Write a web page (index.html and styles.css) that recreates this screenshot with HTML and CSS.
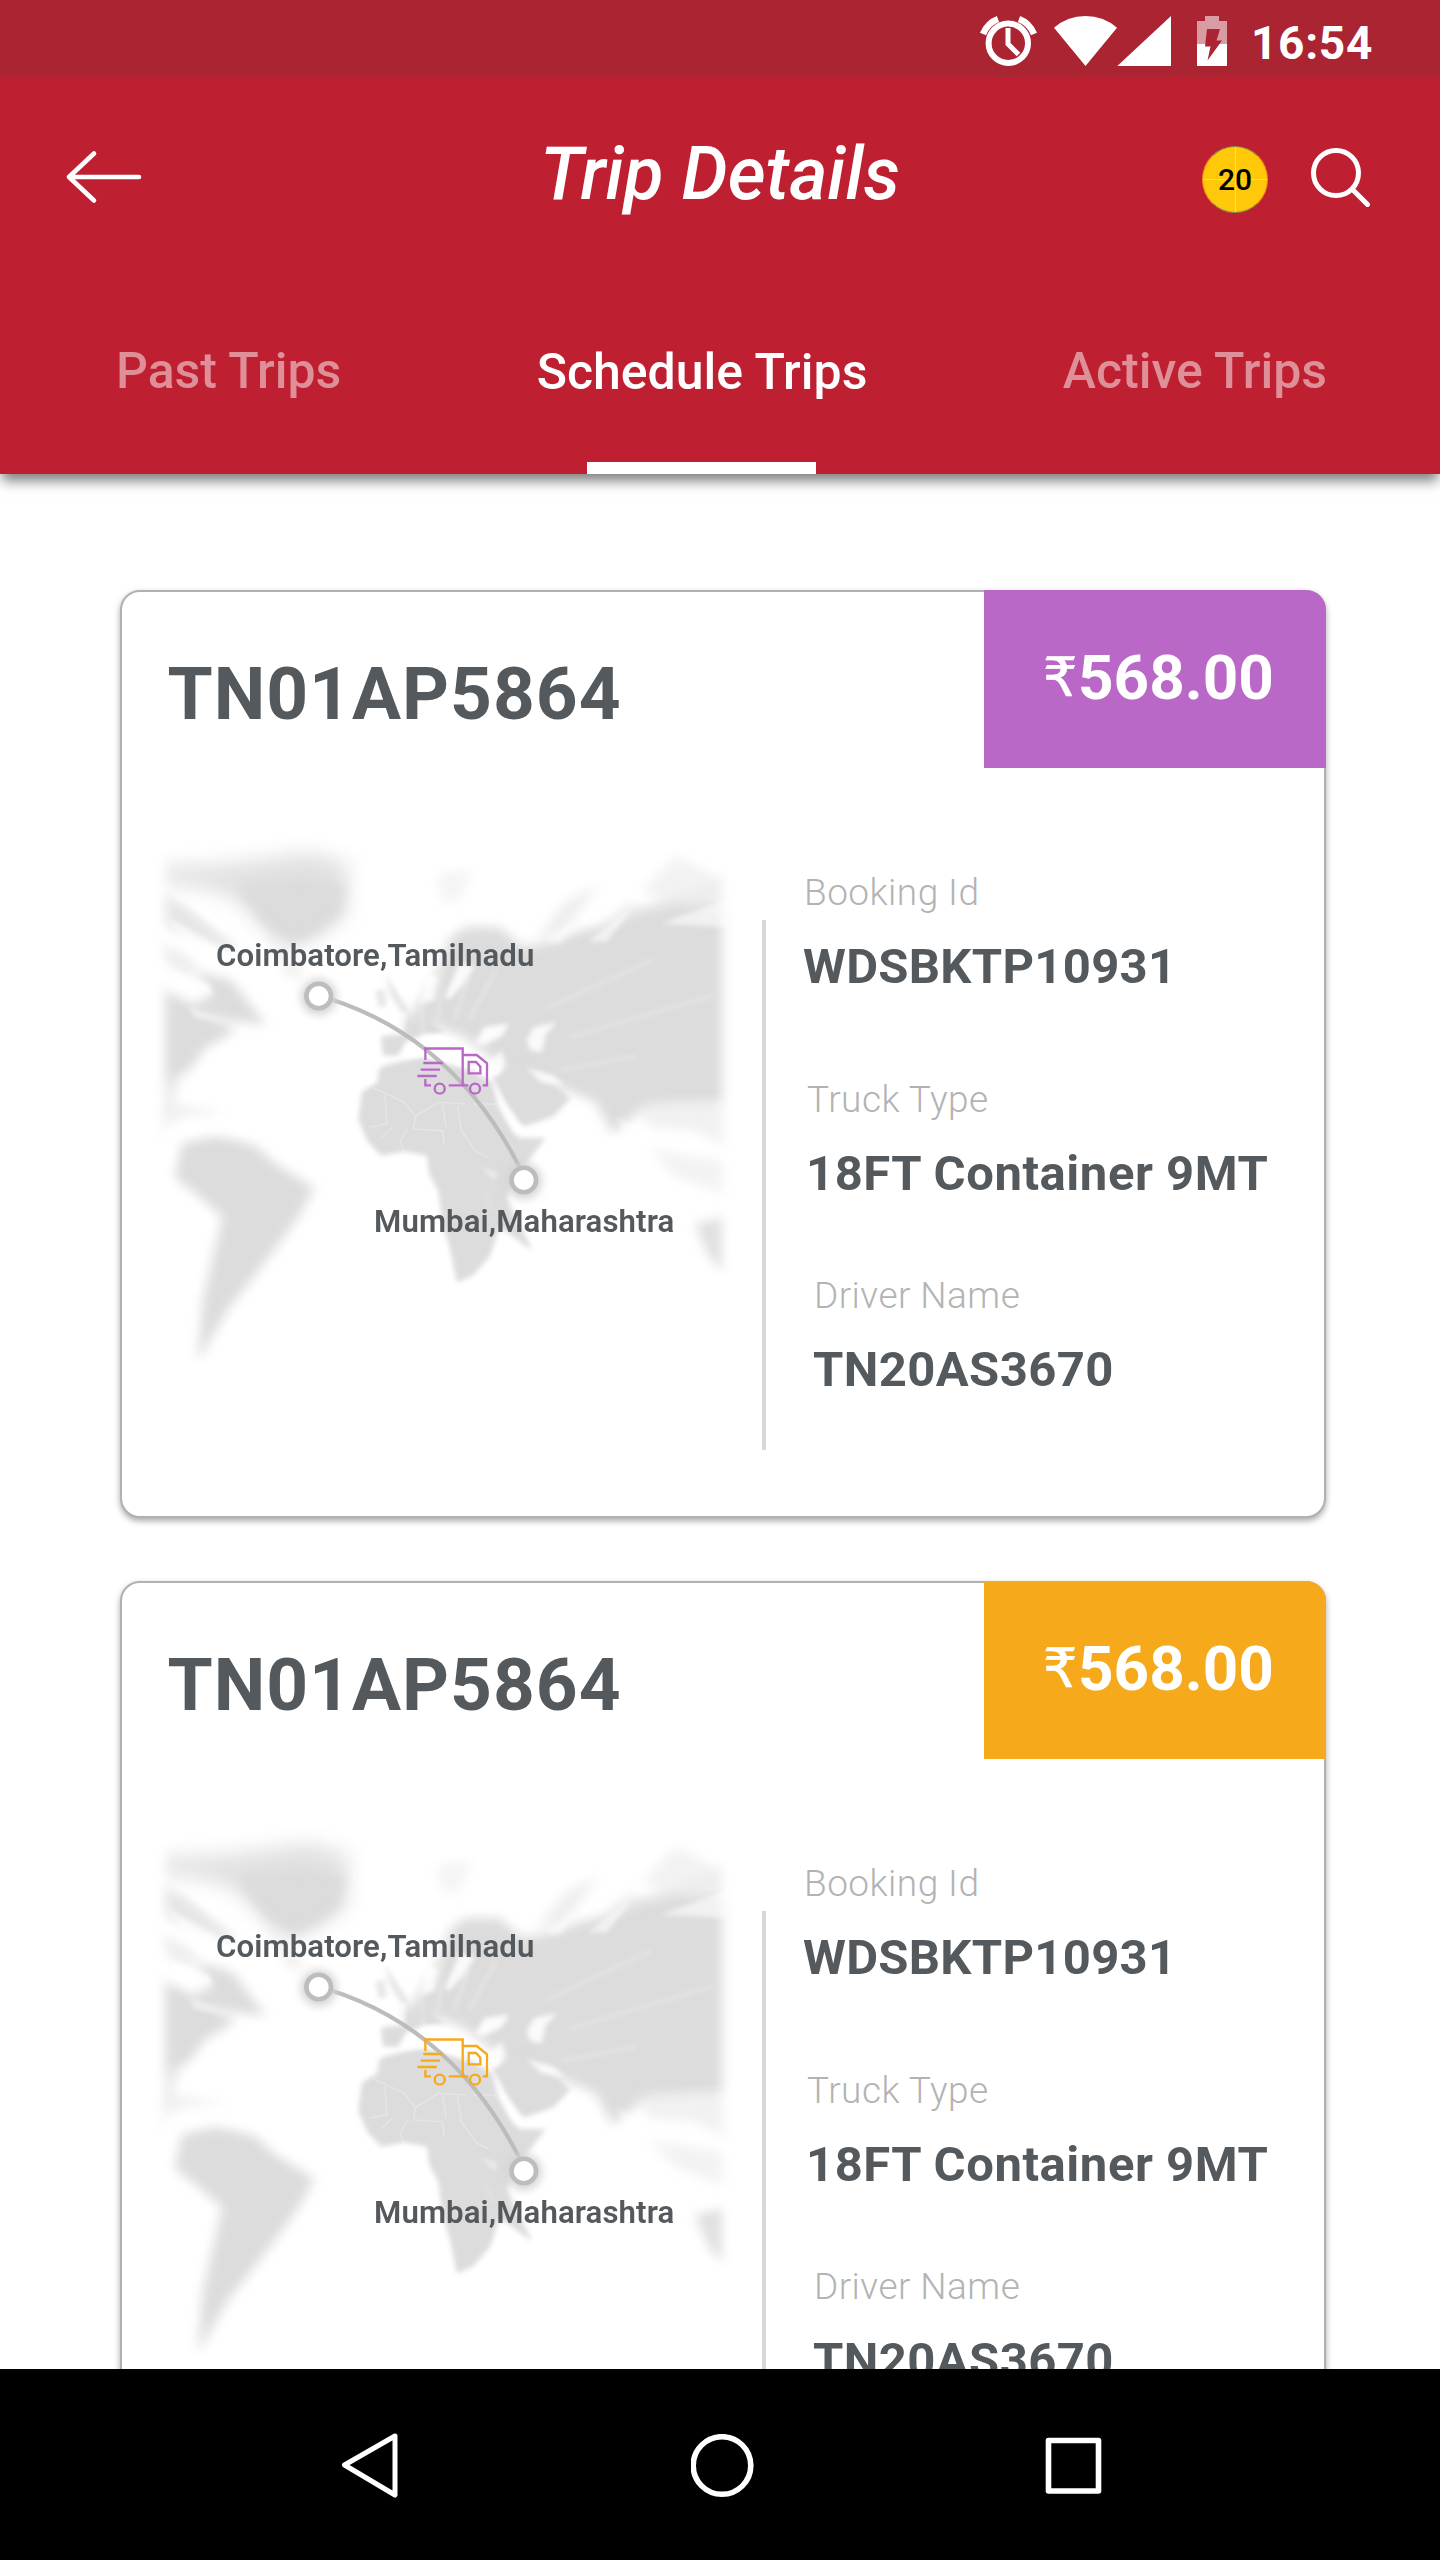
FILE: index.html
```html
<!DOCTYPE html>
<html lang="en">
<head>
<meta charset="utf-8">
<meta name="viewport" content="width=device-width, initial-scale=1">
<title>Trip Details</title>
<link rel="stylesheet" href="styles.css">
</head>
<body>
<svg class="defs" width="0" height="0" aria-hidden="true">
  <defs>
    <filter id="soft-s" x="-20%" y="-20%" width="140%" height="140%"><feGaussianBlur stdDeviation="7"/></filter>
    <filter id="soft-m" x="-20%" y="-20%" width="140%" height="140%"><feGaussianBlur stdDeviation="15"/></filter>
    <filter id="soft-l" x="-30%" y="-30%" width="160%" height="160%"><feGaussianBlur stdDeviation="28"/></filter>
    <mask id="map-fade" maskUnits="userSpaceOnUse" x="0" y="0" width="1568" height="1568">
      <rect x="66" y="30" width="1456" height="1510" fill="#fff" filter="url(#soft-m)"/>
    </mask>
    <symbol id="world" viewBox="0 0 1568 1568" preserveAspectRatio="none">
      <g mask="url(#map-fade)" fill="#dcdcdc">
        <!-- Greenland -->
        <path filter="url(#soft-l)" opacity=".85" d="M20 130L200 125L440 90L545 120L535 270L470 320L400 360L330 310L250 220L160 190L20 170Z"/>
        <path filter="url(#soft-m)" d="M250 185L420 165L535 180L525 260L470 310L400 345L335 305Z"/>
        <path filter="url(#soft-m)" opacity=".5" d="M330 300L430 440L390 440Z"/>
        <!-- North America -->
        <g filter="url(#soft-m)">
          <path d="M20 190L120 240L250 355L230 365L20 280Z" opacity=".7"/>
          <path d="M20 320L150 400L130 440L20 380Z" opacity=".5"/>
          <path d="M140 420L240 450L330 575L230 560L130 520L190 490Z"/>
          <path d="M20 460L110 500L250 590L170 640L130 700L20 760Z"/>
          <path d="M20 740L110 720L20 940Z" opacity=".6"/>
          <path d="M20 780L230 820L120 830L20 880Z" opacity=".4"/>
        </g>
        <!-- South America -->
        <path filter="url(#soft-m)" d="M110 905L200 885L300 910L350 960L455 1030L415 1110L340 1220L230 1370L150 1520L165 1340L215 1110L150 1050L90 1000Z"/>
        <!-- Eurasia -->
        <path filter="url(#soft-m)" d="M690 565L730 510L780 420L810 330L850 300L940 300L1000 355L1080 340L1150 310L1230 290L1300 255L1400 235L1600 250L1600 790L1400 795L1320 800L1290 830L1235 880L1190 790L1100 750L1020 730L960 710L900 650L850 610L760 570L700 600Z"/>
        <path filter="url(#soft-s)" d="M630 605L690 600L705 545L760 560L800 600L740 600L695 620L675 660L635 660Z"/>
        <g filter="url(#soft-s)" opacity=".7">
          <path d="M640 430L710 545L680 535L655 490Z"/>
          <path d="M615 480L640 470L645 520L625 525Z"/>
        </g>
        <g filter="url(#soft-m)" opacity=".5">
          <path d="M780 150L870 140L830 230L785 225Z" opacity=".6"/>
          <path d="M1030 340L1110 230L1200 180L1110 310Z"/>
          <path d="M1200 300L1280 230L1330 260Z"/>
          <path d="M1310 200L1400 100L1510 160L1400 240Z" opacity=".7"/>
          <path d="M1280 260L1540 150L1540 260Z"/>
        </g>
        <!-- Africa and Arabia -->
        <path filter="url(#soft-s)" d="M645 685L740 660L850 690L920 735L960 840L990 890L1060 890L1010 960L975 1010L960 1060L1025 1205L940 1140L915 1220L870 1275L828 1295L810 1200L790 1130L780 1040L755 990L750 940L690 928L630 940L595 900L570 840L580 760L620 735L625 695Z"/>
        <path filter="url(#soft-s)" d="M920 720L1000 670L1080 735L1125 780L1080 830L1000 860L950 790Z"/>
        <!-- South-east Asia and Australia -->
        <g filter="url(#soft-m)">
          <path opacity=".4" d="M1290 790L1560 790L1560 930L1450 870L1330 860Z"/>
          <path opacity=".35" d="M1330 920L1560 960L1560 1060L1400 1000Z"/>
          <path opacity=".9" d="M1450 1130L1540 1110L1540 1270L1490 1230Z"/>
        </g>
      </g>
      <!-- seas and zoom streaks -->
      <g fill="#fff" filter="url(#soft-s)">
        <path opacity=".9" d="M875 625L900 580L965 570L945 605L900 630Z"/>
        <path opacity=".85" d="M1010 615L1030 580L1090 565L1060 600L1050 650L1020 645Z"/>
        <path opacity=".8" d="M900 690L945 645L955 680L930 720Z"/>
        <path opacity=".95" d="M700 650L745 605L790 600L850 635L860 700L760 665L680 665Z"/>
        <path opacity=".8" d="M735 515L745 430L780 440L770 505Z"/>
        <path opacity=".85" d="M795 500L835 400L875 410L845 460L810 500Z"/>
        <path opacity=".85" d="M925 735L985 850L1010 865L980 880L935 800Z"/>
        <path opacity=".85" d="M1010 695L1080 715L1110 745L1050 735Z"/>
        <path opacity=".6" d="M890 970L935 990L925 1005Z"/>
        <path opacity=".5" d="M885 1010L935 1110L915 1080Z"/>
        <path opacity=".55" d="M960 1060L1000 1140L980 1130Z"/>
        <path opacity=".6" d="M1170 340L1290 240L1220 340Z"/>
        <path opacity=".5" d="M1060 340L1140 280L1100 345Z"/>
        <path opacity=".6" d="M1360 290L1540 220L1540 300Z"/>
        <path opacity=".7" d="M80 420L180 460L190 490L90 470Z"/>
        <path opacity=".6" d="M70 270L240 380L300 440L150 400Z"/>
        <path opacity=".5" d="M130 520L240 570L140 555Z"/>
        <path opacity=".6" d="M80 200L180 250L300 340L200 300Z"/>
        <path opacity=".4" d="M1240 830L1290 920L1350 930L1290 850Z"/>
      </g>
      <g fill="none" stroke="#fff" stroke-width="9" opacity=".3" filter="url(#soft-s)">
        <path d="M1120 610L1500 490M1060 530L1340 390M1100 700L1300 660M860 560L930 420M820 560L860 440M715 570L695 440M740 620L735 480M780 560L790 420M650 520L610 430"/>
      </g>
      <g fill="none" stroke="#fff" stroke-width="4" opacity=".28">
        <path d="M610 750L690 790L720 830L780 790L850 795M720 830L715 865L790 870L795 910M640 770L645 850L600 860M830 800L840 870L880 930L910 945M790 790L800 860M660 860L630 890M700 865L680 900L690 930M870 795L930 795"/>
      </g>
    </symbol>
    <symbol id="truck" viewBox="0 0 216 146">
      <g fill="none" stroke="currentColor" stroke-width="7">
        <path d="M26 42V7.500H138V118H96M26 99V118H43M138 27H180L211 52V118H198M138 118H155"/>
        <path d="M20 51H78M12 71H70M2 90H60"/>
        <path d="M156 48H178L191 62V82H156Z"/>
        <circle cx="69" cy="128" r="15"/><circle cx="175" cy="128" r="15"/>
      </g>
    </symbol>
  </defs>
</svg>

<div class="screen">
  <header class="header">
    <div class="status">
      <svg class="status-icons" width="250" height="60" viewBox="0 0 250 60" aria-hidden="true">
        <g fill="none" stroke="#fff">
          <circle cx="28.300" cy="33.300" r="19.700" stroke-width="6"/>
          <path d="M28 18V34L38.500 44.500" stroke-width="5"/>
          <path d="M3 24Q7.500 13 18 9M54 24Q49.500 13 39 9" stroke-width="6.500"/>
        </g>
        <g fill="#fff">
          <path d="M74 17.700Q87.500 6 105.500 6T137 17.700L105.500 56Z"/>
          <path d="M137.300 56L191 6V56Z"/>
          <path fill-opacity=".55" d="M217 11H225V6H239V11H247V34H217Z"/>
          <path d="M217 34H247V56H217Z"/>
        </g>
        <path fill="#aa2432" d="M227 19H240L236.500 30.500H242L227.500 50.500L230.500 36.500H225Z"/>
      </svg>
      <span class="clock">16:54</span>
    </div>
    <div class="appbar">
      <svg class="back" width="90" height="64" viewBox="0 0 90 64" fill="none" stroke="#fff" stroke-width="4.600" stroke-linecap="round" stroke-linejoin="round"><path d="M79 34H9M34 10.500L9 34L34 57.500"/></svg>
      <h1 class="title">Trip Details</h1>
      <div class="badge">20</div>
      <svg class="search" width="64" height="64" viewBox="0 0 64 64" fill="none" stroke="#fff" stroke-width="5" stroke-linecap="round"><circle cx="28" cy="30" r="22.500"/><path d="M45 47L59.500 61.500"/></svg>
    </div>
    <nav class="tabs">
      <a class="tab">Past Trips</a>
      <a class="tab tab-active">Schedule Trips</a>
      <a class="tab">Active Trips</a>
    </nav>
  </header>

  <main class="list">
    <article class="card card-purple">
      <div class="card-head">
        <h2 class="plate">TN01AP5864</h2>
        <div class="price"><span class="rupee">₹</span><span>568.00</span></div>
      </div>
      <div class="card-body">
        <div class="map">
          <svg class="map-art" width="600" height="560" viewBox="0 0 600 560" aria-hidden="true">
            <use href="#world" width="600" height="560"/>
            <path class="route" d="M190 179Q314.500 219 380 348"/>
            <circle class="glow" cx="178.700" cy="177" r="18"/><circle class="pin" cx="178.700" cy="176" r="12.300"/>
            <circle class="glow" cx="383.800" cy="361" r="18"/><circle class="pin" cx="383.800" cy="360" r="12.300"/>
            <use href="#truck" x="276.700" y="226" width="72" height="48.700"/>
          </svg>
          <span class="place place-from">Coimbatore,Tamilnadu</span>
          <span class="place place-to">Mumbai,Maharashtra</span>
        </div>
        <div class="divider"></div>
        <dl class="details">
          <div class="item booking"><dt>Booking Id</dt><dd>WDSBKTP10931</dd></div>
          <div class="item truck"><dt>Truck Type</dt><dd>18FT Container 9MT</dd></div>
          <div class="item driver"><dt>Driver Name</dt><dd>TN20AS3670</dd></div>
        </dl>
      </div>
    </article>

    <article class="card card-orange">
      <div class="card-head">
        <h2 class="plate">TN01AP5864</h2>
        <div class="price"><span class="rupee">₹</span><span>568.00</span></div>
      </div>
      <div class="card-body">
        <div class="map">
          <svg class="map-art" width="600" height="560" viewBox="0 0 600 560" aria-hidden="true">
            <use href="#world" width="600" height="560"/>
            <path class="route" d="M190 179Q314.500 219 380 348"/>
            <circle class="glow" cx="178.700" cy="177" r="18"/><circle class="pin" cx="178.700" cy="176" r="12.300"/>
            <circle class="glow" cx="383.800" cy="361" r="18"/><circle class="pin" cx="383.800" cy="360" r="12.300"/>
            <use href="#truck" x="276.700" y="226" width="72" height="48.700"/>
          </svg>
          <span class="place place-from">Coimbatore,Tamilnadu</span>
          <span class="place place-to">Mumbai,Maharashtra</span>
        </div>
        <div class="divider"></div>
        <dl class="details">
          <div class="item booking"><dt>Booking Id</dt><dd>WDSBKTP10931</dd></div>
          <div class="item truck"><dt>Truck Type</dt><dd>18FT Container 9MT</dd></div>
          <div class="item driver"><dt>Driver Name</dt><dd>TN20AS3670</dd></div>
        </dl>
      </div>
    </article>
  </main>

  <footer class="navbar">
    <svg width="60" height="70" viewBox="0 0 60 70" fill="none" stroke="#fff" stroke-width="5" stroke-linejoin="round"><path d="M55 5L4.500 34L55 64Z"/></svg>
    <svg width="64" height="64" viewBox="0 0 64 64" fill="none" stroke="#fff" stroke-width="5.600"><circle cx="31" cy="31.500" r="28.800"/></svg>
    <svg width="58" height="58" viewBox="0 0 58 58" fill="none" stroke="#fff" stroke-width="5.600" stroke-linejoin="round"><rect x="3.500" y="3.500" width="50" height="50.500"/></svg>
  </footer>
</div>
</body>
</html>
```
FILE: styles.css
```css
* {
  box-sizing: border-box;
  margin: 0;
  padding: 0;
}

body {
  background: #fff;
  color: #54595d;
  font-family: Roboto, "Noto Sans", sans-serif;
}

.defs {
  position: absolute;
}

.screen {
  display: flex;
  flex-direction: column;
  width: 1440px;
  height: 2560px;
  overflow: hidden;
}

/* Header */
.header {
  position: relative;
  z-index: 1;
  flex: none;
  height: 474px;
  background: #be2032;
  color: #fff;
  box-shadow: 0 9px 12px -2px rgba(0, 0, 0, .5);
}

.status {
  display: flex;
  height: 77px;
  padding: 10px 0 0 980px;
  background: #aa2432;
}

.status-icons {
  flex: none;
}

.clock {
  margin-left: 21px;
  font-size: 46px;
  font-weight: 700;
  line-height: 66px;
  letter-spacing: .7px;
}

.appbar {
  display: flex;
  align-items: center;
  height: 195px;
  padding: 0 68px 0 60px;
}

.title {
  margin: -2px 0 0 390px;
  font-size: 73px;
  font-style: italic;
  font-weight: 500;
  line-height: 90px;
}

.badge {
  width: 66px;
  height: 67px;
  margin: 9px 40px 0 auto;
  border: 1px solid #f78a10;
  border-radius: 50%;
  background:
    linear-gradient(#ffdf4a, #ffdf4a) center / 1px 100% no-repeat,
    linear-gradient(#ffdf4a, #ffdf4a) center / 100% 1px no-repeat,
    #ffc808;
  border-top-color: #8c8a4c;
  border-bottom-color: #8c8a4c;
  color: #000;
  font-size: 30px;
  font-weight: 500;
  line-height: 66px;
  text-align: center;
}

.tabs {
  display: flex;
  justify-content: space-between;
  height: 202px;
  padding: 0 113px 0 116px;
}

.tab {
  position: relative;
  padding-top: 58px;
  color: #de8f98;
  font-size: 50px;
  font-weight: 500;
  line-height: 82px;
}

.tab-active {
  padding-top: 59px;
  color: #fff;
}

.tab-active::after {
  content: "";
  position: absolute;
  bottom: 0;
  left: 50px;
  width: 229px;
  height: 12px;
  background: #fff;
}

/* Trip cards */
.list {
  display: flex;
  flex: 1;
  flex-direction: column;
  gap: 63px;
  min-height: 0;
  overflow: hidden;
  padding: 116px 114px 0 120px;
}

.card {
  flex: none;
  height: 928px;
  border: 2px solid #b0b1b1;
  border-radius: 20px;
  background: #fff;
  box-shadow: 0 3px 6px rgba(0, 0, 0, .34);
}

.card-purple {
  --accent: #b968c7;
}

.card-orange {
  --accent: #f6a91b;
}

.card-head {
  display: flex;
  justify-content: space-between;
  height: 176px;
}

.plate {
  padding: 60px 0 0 45.500px;
  font-size: 73px;
  font-weight: 700;
  line-height: 84px;
  letter-spacing: 1px;
}

.price {
  display: flex;
  width: 342px;
  height: 178px;
  margin: -2px -2px 0 0;
  padding: 46px 0 0 59px;
  border-radius: 0 20px 0 0;
  background: var(--accent);
  color: #fff;
  font-size: 62px;
  font-weight: 700;
  line-height: 84px;
}

.rupee {
  width: 35px;
  font-family: "DejaVu Sans", sans-serif;
  font-size: 54px;
  font-weight: 400;
  line-height: 84px;
  -webkit-text-stroke: .6px #fff;
}

.card-body {
  display: flex;
}

.map {
  position: relative;
  width: 600px;
  height: 560px;
  margin: 52px 0 0 18px;
}

.map-art {
  display: block;
  color: var(--accent);
}

.route {
  fill: none;
  stroke: #bcbcbc;
  stroke-width: 4;
}

.glow {
  fill: #d4d4d4;
  filter: blur(4px);
}

.pin {
  fill: #fff;
  stroke: #bdbdbd;
  stroke-width: 4.600;
}

.place {
  position: absolute;
  font-size: 31.200px;
  font-weight: 600;
  line-height: 40px;
  letter-spacing: .1px;
  white-space: nowrap;
}

.place-from {
  top: 116px;
  left: 76px;
}

.place-to {
  top: 382px;
  left: 234px;
}

.divider {
  width: 4px;
  height: 530px;
  margin: 152px 0 0 22px;
  background: #d8d8d8;
}

.details {
  display: flex;
  flex-direction: column;
  padding-top: 100px;
}

.item {
  display: flex;
  flex-direction: column;
  gap: 19px;
}

.item dt {
  color: #b3b3b3;
  font-size: 37px;
  font-weight: 350;
  line-height: 50px;
  letter-spacing: .45px;
}

.item dd {
  font-size: 49px;
  font-weight: 700;
  line-height: 60px;
  letter-spacing: .4px;
  white-space: nowrap;
}

.booking {
  padding-left: 38px;
}

.booking dd {
  margin-left: -1px;
  letter-spacing: .3px;
}

.truck {
  margin-top: 78px;
  padding-left: 41px;
}

.truck dd {
  margin-left: -1px;
  letter-spacing: .55px;
}

.driver {
  margin-top: 67px;
  padding-left: 48px;
}

.driver dd {
  margin-left: -1px;
}

/* System navigation */
.navbar {
  display: flex;
  flex: none;
  align-items: center;
  justify-content: space-between;
  height: 191px;
  padding: 3px 337px 0 340px;
  background: #000;
}
```
